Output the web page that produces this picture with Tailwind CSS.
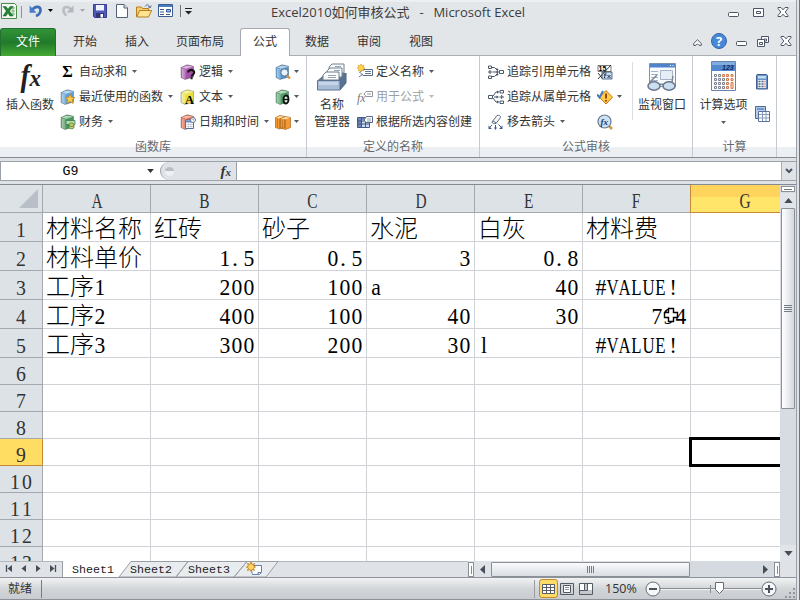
<!DOCTYPE html>
<html lang="zh-CN">

<head>
    <meta charset="UTF-8">
    <meta name="viewport" content="width=device-width, initial-scale=1.0">
    <title>Excel2010如何审核公式 - Microsoft Excel</title>
    <script src="https://cdn.jsdelivr.net/npm/@tailwindcss/browser@4"></script>
</head>

<body class="w-[800px] h-[600px] overflow-hidden bg-[#e3e6e9] font-['Open_Sans','Noto_Sans_CJK_SC',sans-serif] text-[12px] leading-4 text-[#333] whitespace-nowrap">
    <!-- Shared icon shapes -->
    <svg class="hidden">
        <symbol id="book" viewBox="0 0 16 16">
            <path d="M1 3.500 7 .8l6.500 1.400V13L5 15.500 1 13.500z" fill="currentColor" stroke="#00000070" stroke-width=".6" />
            <path d="m1.600 3.600 5.300-2.200 5.600 1.100-7 2z" fill="#fff" fill-opacity=".6" />
            <path d="M4.500 5v10L1.300 13.500v-9.700z" fill="#fff" fill-opacity=".3" />
            <path d="M2.800 4.800v9M5 5l8.300-2.500M5 5v10" stroke="#fff" stroke-opacity=".45" stroke-width=".7" fill="none" />
        </symbol>
        <symbol id="caret" viewBox="0 0 5 3">
            <path d="M0 0h5L2.5 3z" fill="currentColor" />
        </symbol>
        <symbol id="close" viewBox="0 0 12 10">
            <path d="M1 .5h3l2 2.300L8 .5h3v1L8.200 5l2.800 3.500v1H8L6 7.200 4 9.500H1v-1L3.800 5 1 1.500z" fill="#fff" stroke="#4c5666" />
        </symbol>
        <symbol id="min" viewBox="0 0 11 5">
            <rect x=".5" y=".5" width="10" height="4" rx="1" fill="#fff" stroke="#4c5666" />
        </symbol>
    </svg>

    <div class="h-full flex">
        <div class="w-[796px] h-full flex flex-col">
            <!-- Title bar -->
            <header class="h-[28px] shrink-0 flex items-start border-t-2 border-[#edf0f3] relative">
                <div class="flex items-start pt-[1px] pl-[1px]">
                    <svg class="w-4 h-4" viewBox="0 0 16 16">
                        <path d="M.5.5h13l2 2v13H.5z" fill="#f3faf2" stroke="#4d8b4d" />
                        <path d="M10 5h4M10 8h4M10 11h4M12 3v10" stroke="#7db37b" />
                        <path d="M2 3.500h3l2 2.800 2-2.800h3L8.500 8l3.500 5H8.800L7 10l-2 3H2l3.300-5z" fill="#258335" stroke="#14602a" stroke-width=".5" />
                    </svg>
                    <div class="w-px h-3 mt-[3px] ml-[4px] bg-[#8d9298]"></div>
                    <svg class="w-3.5 h-3.5 ml-[7px] mt-px" viewBox="0 0 14 14">
                        <path d="M3 6C6 1.500 11.500 2 11.500 6c0 3-2 5-4.500 6" fill="none" stroke="#3c6eb8" stroke-width="2.700" />
                        <path d="M.6 1.500v7.300h7z" fill="#477dca" />
                    </svg>
                    <svg class="w-[5px] h-[3px] ml-[5px] mt-[6px] text-black"><use href="#caret" /></svg>
                    <svg class="w-3.5 h-3.5 ml-[8px] mt-px" viewBox="0 0 14 14">
                        <path d="M10 6C8 2 2.500 2 2.500 6c0 3 1.500 4.500 3 5.500" fill="none" stroke="#b8bdc2" stroke-width="2.500" />
                        <path d="M12.500 1.500v7h-7z" fill="#b3b8be" />
                    </svg>
                    <svg class="w-[5px] h-[3px] ml-[5px] mt-[6px] text-[#a7abb0]"><use href="#caret" /></svg>
                    <svg class="w-3.5 h-3.5 ml-[8px] mt-px" viewBox="0 0 14 14">
                        <path d="M.5.5h13v13h-12l-1-1z" fill="#5058ba" stroke="#373d94" />
                        <path d="M3 1h8v5.500H3z" fill="#eef3ff" />
                        <path d="M3 9h8v4.500H3z" fill="#313676" />
                        <path d="M7.500 10h2.500v3.500H7.500z" fill="#fff" />
                    </svg>
                    <svg class="w-3 h-3.5 ml-[9px] mt-px" viewBox="0 0 12 14">
                        <path d="M.5.5H8L11.500 4v9.500H.5z" fill="#fff" stroke="#526079" />
                        <path d="M8 .5V4h3.500" fill="#dce5ef" stroke="#526079" />
                    </svg>
                    <svg class="w-4 h-3.5 ml-[8px] mt-px" viewBox="0 0 16 14">
                        <path d="M.5 12.500V3h5l1 1.500h6v8z" fill="#f5ce67" stroke="#b57e22" />
                        <path d="m.7 13 3-6.500h12L12.500 13z" fill="#ffe393" stroke="#b57e22" />
                        <path d="M9 2.500c2-2.500 4-2 5 1M12 2.500l2 1.500 1.300-2.500" fill="none" stroke="#5c6f91" />
                    </svg>
                    <svg class="w-[15px] h-[13px] ml-[6px] mt-px" viewBox="0 0 15 13">
                        <path d="M.5.5h14v12H.5z" fill="#fff" stroke="#3b5c92" />
                        <path d="M1 1h13v2H1z" fill="#4c7bc2" />
                        <path d="M2 5.500h4M2 8h4M2 10.500h4M8 10.500h4" stroke="#3e5685" />
                        <path d="M8.500 5.500h4V8h-4z" fill="#93b6e8" stroke="#3b5c92" />
                    </svg>
                    <div class="w-px h-3 mt-[2px] ml-[7px] bg-[#6d7278]"></div>
                    <svg class="w-[7px] h-[7px] ml-[4px] mt-[5px]" viewBox="0 0 7 7">
                        <path d="M0 .5h7" stroke="#222" />
                        <path d="M0 3h7L3.500 6.500z" fill="#222" />
                    </svg>
                </div>
                <div id="title" class="absolute left-[271px] top-[2px] w-[254px] text-[13px] text-[#3c3c3c] flex justify-between"><span>Excel2010如何审核公式</span><span>-</span><span>Microsoft Excel</span></div>
                <div class="ml-auto mr-[7px] flex items-center h-5">
                    <svg class="w-[11px] h-[5px] mt-[4px]"><use href="#min" /></svg>
                    <svg class="w-[11px] h-[9px] ml-[14px]" viewBox="0 0 11 9">
                        <path d="M.5.5h10v8H.5zM3.500 3.500h4v2h-4z" fill="#fff" stroke="#4c5666" />
                    </svg>
                    <svg class="w-3 h-2.5 ml-[13px]"><use href="#close" /></svg>
                </div>
            </header>

            <!-- Ribbon tabs -->
            <nav class="h-[28px] shrink-0 flex items-stretch text-center leading-[27px] shadow-[inset_0_-1px_#a9aeb4] text-[#333]">
                <div class="w-[56px] rounded-t-[3px] border border-b-0 border-[#227030] bg-linear-to-b from-[#329438] via-[#217a2a] to-[#45a934] text-white leading-[26px]">文件</div>
                <div class="w-[58px]">开始</div>
                <div class="w-[46px]">插入</div>
                <div class="w-[80px]">页面布局</div>
                <div class="w-[50px] bg-white border border-b-0 border-[#a5aab0] rounded-t-[3px] leading-[26px]">公式</div>
                <div class="w-[54px]">数据</div>
                <div class="w-[50px]">审阅</div>
                <div class="w-[54px]">视图</div>
                <div class="ml-auto mr-[4px] mb-[2px] flex items-center">
                    <svg class="w-[9px] h-[7px] mt-[3px]" viewBox="0 0 9 7">
                        <path d="M.7 4.500 4.500.8l3.800 3.700v1.800H6L4.500 4.800 3 6.300H.7z" fill="#fff" stroke="#4c5666" />
                    </svg>
                    <div class="w-4 h-4 ml-[9px] rounded-full border border-[#3264aa] bg-[#4788d8] text-white text-[13px] leading-[14px] font-bold">?</div>
                    <svg class="w-[11px] h-[5px] ml-[9px] mt-[4px]"><use href="#min" /></svg>
                    <svg class="w-3 h-[11px] ml-[10px]" viewBox="0 0 12 11">
                        <path d="M4.500.5h7v6h-7z" fill="#fff" stroke="#4c5666" />
                        <path d="M7 3h2.500v2H7z" fill="none" stroke="#4c5666" />
                        <path d="M.5 3.500h7v7h-7zM2.500 6.500h3v2h-3z" fill="#fff" stroke="#4c5666" />
                    </svg>
                    <svg class="w-3 h-2.5 ml-[11px]"><use href="#close" /></svg>
                </div>
            </nav>

            <!-- Ribbon -->
            <section class="h-[102px] shrink-0 flex bg-white bg-linear-to-b from-white from-90% to-[#edf0f3] to-90% border-b border-[#868b91] text-[#333]">
                <div class="w-[307px] border-r border-[#c4cad0] flex flex-col">
                    <div class="flex h-[83px] pt-[3px]">
                        <div class="w-[60px] flex flex-col items-center">
                            <div class="h-[38px] leading-[34px] font-['Liberation_Serif',serif] italic font-bold text-[31px] tracking-[-1px] text-[#222]"><span class="inline-block scale-x-90">f</span><span class="text-[23px]">x</span></div>
                            <div>插入函数</div>
                        </div>
                        <div class="w-[120px] flex flex-col">
                            <div class="h-[25px] flex items-center"><span class="w-[19px] text-center pr-1 font-['Liberation_Serif',serif] font-bold text-[16px] text-black">Σ</span>自动求和<svg class="w-[5px] h-[3px] ml-[5px] text-[#555b63]"><use href="#caret" /></svg></div>
                            <div class="h-[25px] flex items-center"><svg class="w-4 h-4 mr-[3px]" viewBox="0 0 16 16"><use href="#book" class="text-[#5d9fd8]" /><path d="m10 5 1.500 3.300 3.500.2-2.700 2.300.9 3.700-3.200-2-3.200 2 .9-3.700L5 8.500l3.500-.2z" fill="#ffca3d" stroke="#b87c18" stroke-width=".7" /></svg>最近使用的函数<svg class="w-[5px] h-[3px] ml-[5px] text-[#555b63]"><use href="#caret" /></svg></div>
                            <div class="h-[25px] flex items-center"><svg class="w-4 h-4 mr-[3px]" viewBox="0 0 16 16"><use href="#book" class="text-[#48975a]" /><path d="M6 6.500h9v4H6z" fill="#b5dba9" stroke="#317348" stroke-width=".7" /><path d="M9 10.500c0-2 5-2 5 0v3c0 1.800-5 1.800-5 0z" fill="#c2cc69" stroke="#446d31" stroke-width=".7" /><path d="M9 11.500c1 1.300 4 1.300 5 0" fill="none" stroke="#446d31" stroke-width=".7" /></svg>财务<svg class="w-[5px] h-[3px] ml-[5px] text-[#555b63]"><use href="#caret" /></svg></div>
                        </div>
                        <div class="w-[95px] flex flex-col">
                            <div class="h-[25px] flex items-center"><svg class="w-4 h-4 mr-[3px]" viewBox="0 0 16 16"><use href="#book" class="text-[#a252a8]" /><path d="M8.200 8.500c0-3.500 6-3.500 6 0 0 2-2.500 2-2.500 4M11.600 13.300v2" fill="none" stroke="#111" stroke-width="2" /></svg>逻辑<svg class="w-[5px] h-[3px] ml-[5px] text-[#555b63]"><use href="#caret" /></svg></div>
                            <div class="h-[25px] flex items-center"><svg class="w-4 h-4 mr-[3px] overflow-visible" viewBox="0 0 16 16"><use href="#book" class="text-[#e9df42]" /><text x="5" y="14.500" class="font-['Liberation_Serif',serif] font-bold text-[12.5px]">A</text></svg>文本<svg class="w-[5px] h-[3px] ml-[5px] text-[#555b63]"><use href="#caret" /></svg></div>
                            <div class="h-[25px] flex items-center"><svg class="w-4 h-4 mr-[3px]" viewBox="0 0 16 16"><use href="#book" class="text-[#e25d38]" /><path d="M5.500 6h8v8.500h-8z" fill="#fff" stroke="#536fa5" /><path d="M6 6.500h7v2H6z" fill="#648bd0" /><path d="M8.300 8v6M11 8v6M6 10.500h7M6 12.500h7" stroke="#aab9d5" stroke-width=".6" /><circle cx="13" cy="6" r="2.500" fill="#fff" stroke="#6a7790" /><path d="M13 4.500V6h1.200" stroke="#6a7790" stroke-width=".7" fill="none" /></svg>日期和时间<svg class="w-[5px] h-[3px] ml-[5px] shrink-0 text-[#555b63]"><use href="#caret" /></svg></div>
                        </div>
                        <div class="flex flex-col">
                            <div class="h-[25px] flex items-center"><svg class="w-4 h-4" viewBox="0 0 16 16"><use href="#book" class="text-[#4f93d1]" /><path d="m12 11.500 3 3" stroke="#d69238" stroke-width="2.200" /><circle cx="9.500" cy="8.500" r="3.600" fill="#e5f2fb" stroke="#69778b" /></svg><svg class="w-[5px] h-[3px] ml-[3px] text-[#555b63]"><use href="#caret" /></svg></div>
                            <div class="h-[25px] flex items-center"><svg class="w-4 h-4" viewBox="0 0 16 16"><use href="#book" class="text-[#509e67]" /><ellipse cx="11" cy="10.500" rx="2.500" ry="4" fill="#d8ead9" stroke="#111" stroke-width="1.900" /><path d="M9 10.500h4" stroke="#111" stroke-width="1.300" /></svg><svg class="w-[5px] h-[3px] ml-[3px] text-[#555b63]"><use href="#caret" /></svg></div>
                            <div class="h-[25px] flex items-center"><svg class="w-4 h-4" viewBox="0 0 16 16"><path d="M.5 3.500 5 1.500l4.500 1v11l-5 1.500-4-1.500zM5.500 4.500l5-2 5 1v10l-5 2-5-1.500z" fill="#f39a35" stroke="#a9631b" stroke-width=".7" /><path d="m1 3.700 4-1.700 4 .8-4.500 1.500zM6 4.700l4.500-1.700 4.500.7-4.500 1.600z" fill="#ffe0ae" /><path d="M2.500 4.500v9M4.500 5v9.500M7.500 5.500v9M10.500 6v9" stroke="#b96d20" stroke-width=".7" /></svg><svg class="w-[5px] h-[3px] ml-[3px] text-[#555b63]"><use href="#caret" /></svg></div>
                        </div>
                    </div>
                    <div class="text-center text-[#65696f]">函数库</div>
                </div>

                <div class="w-[173px] border-r border-[#c4cad0] flex flex-col">
                    <div class="flex h-[83px] pt-[3px]">
                        <div class="w-[50px] flex flex-col items-center">
                            <svg class="w-[32px] h-[32px] mt-[3px] mb-[3px] shrink-0" viewBox="0 0 32 32">
                                <path d="m2 18 8-7h20l-6 7z" fill="#657990" />
                                <path d="M13 9V5l3-3h12v9H13z" fill="#f9fbfc" stroke="#71808d" />
                                <path d="M11 13V9l3-3h12v9H11z" fill="#f9fbfc" stroke="#71808d" />
                                <path d="M7 18v-5l3-3h13v8z" fill="#f9fbfc" stroke="#71808d" />
                                <path d="M12 13.500h8M12 15.500h8M18 8.500h6M19 4.500h6" stroke="#97a3ae" />
                                <path d="M24 18l6-7v10l-6 7z" fill="#587296" stroke="#4f6581" />
                                <path d="M1.500 18.500H24V28H1.500z" fill="#a9bdd6" stroke="#5c7492" />
                                <path d="M3 20h19v3H3z" fill="#c5d5e7" />
                            </svg>
                            <div>名称</div>
                            <div class="mt-px">管理器</div>
                        </div>
                        <div class="flex flex-col">
                            <div class="h-[25px] flex items-center"><svg class="w-4 h-4 mr-[3px]" viewBox="0 0 16 16"><path d="M2.500 8 6 5.500h9.500v6H6z" fill="#fff" stroke="#59698a" /><path d="M8 7.500h6M8 9.500h6M2 13l4-3" stroke="#65748f" /><path d="m4 0 1 2 2-1-1 2 2 1-2 1 1 2-2-1-1 2-1-2-2 1 1-2-2-1 2-1-1-2 2 1z" fill="#ffd543" stroke="#dc982e" stroke-width=".6" /></svg>定义名称<svg class="w-[5px] h-[3px] ml-[5px] text-[#555b63]"><use href="#caret" /></svg></div>
                            <div class="h-[25px] flex items-center text-[#9c9fa3]"><svg class="w-4 h-4 mr-[3px]" viewBox="0 0 16 16"><text x="0" y="12.500" fill="#777" class="font-['Liberation_Serif',serif] italic text-[12px]">fx</text><path d="M7 5 9 2.500h6.500v5H9z" fill="#fff" stroke="#91969d" /><path d="M10 5h4" stroke="#999" /></svg>用于公式<svg class="w-[5px] h-[3px] ml-[5px] text-[#b5b8bc]"><use href="#caret" /></svg></div>
                            <div class="h-[25px] flex items-center"><svg class="w-4 h-4 mr-[3px]" viewBox="0 0 16 16"><path d="M.5 3.500h12v10H.5z" fill="#cedcf0" stroke="#415784" /><path d="M1 4h3v9H1zM4 4h8v2H4z" fill="#7188b8" /><path d="M4.500 4v9M8.500 4v9M1 7h11M1 10h11" stroke="#415784" /><path d="M7 6 9.500 2.500h6v6H9z" fill="#fff" stroke="#59698a" /><path d="M10 5h4M10 7h4" stroke="#65748f" stroke-width=".7" /></svg>根据所选内容创建</div>
                        </div>
                    </div>
                    <div class="text-center text-[#65696f]">定义的名称</div>
                </div>

                <div class="w-[213px] border-r border-[#c4cad0] flex flex-col">
                    <div class="flex h-[83px] pt-[3px]">
                        <div class="w-[117px] pl-[8px] flex flex-col">
                            <div class="h-[25px] flex items-center"><svg class="w-4 h-4 mr-[3px]" viewBox="0 0 16 16"><path d="M.5 2h3v2.500h-3zM.5 12h3v2.500h-3zM11.500 6.500h4v3h-4z" fill="#fff" stroke="#4d5a6c" /><path d="M4 3.500h2.500L9 6M4 12.500h2.500L9 10M4.500 8h6M0 8h4M2 6v4" fill="none" stroke="#48566a" /><path d="m8 4 2.500 1-1 2.500zM8 12l2.500-1-1-2.500zM8.500 6.500l2.500 1.500-2.500 1.500z" fill="#48566a" /></svg>追踪引用单元格</div>
                            <div class="h-[25px] flex items-center"><svg class="w-4 h-4 mr-[3px]" viewBox="0 0 16 16"><path d="M12 1.500h3.500V4H12zM12 12h3.500v2.500H12zM.5 6.500h4v3h-4z" fill="#fff" stroke="#4d5a6c" /><path d="m5 7 3-4h2M5 9l3 4h2M6 8h3M11.500 8H16M13.700 6v4" fill="none" stroke="#48566a" /><path d="M9 1.500v3L11.500 3zM9 11.500v3l2.500-1.500zM8.500 6.500v3L11 8z" fill="#48566a" /></svg>追踪从属单元格</div>
                            <div class="h-[25px] flex items-center"><svg class="w-4 h-4 mr-[3px]" viewBox="0 0 16 16"><path d="M4 8 9 1.500c2-.8 4 .5 3.500 2L8 9.500c-2 .5-4 0-4-1.500z" fill="#f4f7fa" stroke="#5c6b83" /><path d="m5 7 3.500 2" stroke="#5c6b83" /><path d="m4 11-3 3M7.500 11v4M10.500 10.500l3 3" stroke="#3e5b8b" /><path d="M.5 11.500V15H4zM6 13.500h3L7.500 16zM14.500 11.500V15H11z" fill="#3e5b8b" /></svg>移去箭头<svg class="w-[5px] h-[3px] ml-[5px] text-[#555b63]"><use href="#caret" /></svg></div>
                        </div>
                        <div class="w-[35px] flex flex-col">
                            <!-- show formulas: a number over a formula, split by a diagonal -->
                            <div class="h-[25px] flex items-center"><svg class="w-4 h-4" viewBox="0 0 16 16"><path d="M1 1.500h13v6H1z" fill="#fff" stroke="#444" stroke-width=".7" /><path d="M5 8h10v7H5z" fill="#c5daf3" stroke="#394b68" stroke-width=".8" /><text x="1.500" y="7.300" class="font-['Liberation_Sans',sans-serif] font-bold text-[7px]">15</text><path d="M9.500 9c-1.500-.5-1.500 1-2 5M7 11h2.500M10.500 11l3 3M13.500 11l-3 3" fill="none" stroke="#1d2c49" /><path d="M1 15 14 1M1 9l4 5" stroke="#222" stroke-width=".9" /></svg></div>
                            <div class="h-[25px] flex items-center"><svg class="w-4 h-4" viewBox="0 0 16 16"><path d="m9 1.500 6.500 6.700L9 15 2.500 8.200z" fill="#ffcf3d" stroke="#d06d21" /><path d="m0 5.500 2.500 3L6 2" fill="none" stroke="#477abd" stroke-width="2" /><path d="M9 4.500v5M9 11v1.500" stroke="#8c2918" stroke-width="1.700" /></svg><svg class="w-[5px] h-[3px] ml-[4px] text-[#555b63]"><use href="#caret" /></svg></div>
                            <div class="h-[25px] flex items-center"><svg class="w-4 h-4" viewBox="0 0 16 16"><path d="m12 12 3 3" stroke="#db9733" stroke-width="2.500" /><circle cx="7.500" cy="7.500" r="6.500" fill="#cfe2f3" stroke="#687990" stroke-width="1.200" /><text x="3.500" y="10.500" fill="#173670" class="font-['Liberation_Serif',serif] italic font-bold text-[9px]">fx</text></svg></div>
                        </div>
                        <div class="w-px h-[58px] mt-[3px] bg-[#d9dde1]"></div>
                        <div class="w-[58px] flex flex-col items-center">
                            <svg class="w-[32px] h-[30px] mt-[3px] mb-[5px] shrink-0" viewBox="0 0 32 30">
                                <path d="M3.500 1.500h26v23h-26z" fill="#fafcfe" stroke="#7d91ab" />
                                <path d="M4 2h25v3.500H4z" fill="#5084ca" />
                                <path d="M24 3.500h1M26.500 3.500h1" stroke="#fff" />
                                <path d="M5 9.500h7M5 12.500h7M5 15.500h7M5 18.500h7M14.500 8.500h12v9h-12z" fill="#e6edf5" stroke="#a3b2c5" />
                                <path d="M4 20 11 13M26 20l1-6" stroke="#7e8792" stroke-width="1.500" />
                                <ellipse cx="8" cy="24" rx="6" ry="4.200" fill="#ccdff0" stroke="#68798c" stroke-width="1.500" />
                                <ellipse cx="23" cy="24" rx="6" ry="4.200" fill="#ccdff0" stroke="#68798c" stroke-width="1.500" />
                                <path d="M13.500 23c1-1 3-1 4 0" fill="none" stroke="#68798c" stroke-width="1.500" />
                            </svg>
                            <div>监视窗口</div>
                        </div>
                    </div>
                    <div class="text-center text-[#65696f]">公式审核</div>
                </div>

                <div class="w-[84px] border-r border-[#c4cad0] flex flex-col">
                    <div class="flex h-[83px] pt-[3px]">
                        <div class="w-[61px] flex flex-col items-center">
                            <svg class="w-[26px] h-[31px] mt-[2px] mb-[5px] shrink-0" viewBox="0 0 26 31">
                                <path d="M.5.5h24v29H.5z" fill="#fdfdfd" stroke="#6684ae" />
                                <path d="M1 1h23v9H1z" fill="#548acd" />
                                <path d="M1 1h23v3H1z" fill="#83addf" />
                                <text x="11" y="8.500" fill="#102b68" class="font-['Liberation_Sans',sans-serif] italic font-bold text-[7px]">123</text>
                                <path d="M3.500 13.500h2v2h-2zM7.500 13.500h2v2h-2zM3.500 17.500h2v2h-2zM7.500 17.500h2v2h-2zM11.500 17.500h2v2h-2zM3.500 21.500h2v2h-2zM7.500 21.500h2v2h-2zM11.500 21.500h2v2h-2zM3.500 25.500h2v2h-2zM7.500 25.500h2v2h-2zM11.500 25.500h2v2h-2z" fill="#eee" stroke="#7b8490" />
                                <path d="M11.500 13.500h2v2h-2zM15.500 13.500h2v2h-2zM20 13.500h2v2h-2zM15.500 17.500h2v2h-2zM20 17.500h2v2h-2zM15.500 21.500h2v2h-2zM20 21.500h2v6h-2zM15.500 25.500h2v2h-2z" fill="#ffd6b5" stroke="#d27a4f" />
                            </svg>
                            <div>计算选项</div>
                            <svg class="w-[5px] h-[3px] mt-[8px] text-[#555b63]"><use href="#caret" /></svg>
                        </div>
                        <div class="flex flex-col">
                            <svg class="w-4 h-4 mt-[15px]" viewBox="0 0 16 16">
                                <path d="M3 .5h9.500l1 1v13.500H2.500V1.500z" fill="#6b93ca" stroke="#415f91" />
                                <path d="M4 2h8v2.500H4z" fill="#bfdcf3" />
                                <path d="M4 6h8v8H4z" fill="#eef4fb" />
                                <path d="M4.500 7.500h2M7.500 7.500h2M4.500 10h2M7.500 10h2M4.500 12.500h2M7.500 12.500h2" stroke="#526688" stroke-width="1.300" />
                                <path d="M10.500 7.500h1M10.500 10h1M10.500 12.500h1" stroke="#dc5038" stroke-width="1.500" />
                            </svg>
                            <svg class="w-[17px] h-[17px] mt-[16px]" viewBox="0 0 17 17">
                                <path d="M1.500.5h10v12h-10z" fill="#b8cce7" stroke="#4e6892" />
                                <path d="M3 2h7v2H3z" fill="#6d98d3" />
                                <path d="M4.500 5.500h11v10h-11z" fill="#fff" stroke="#59709a" />
                                <path d="M5 8.500h10M5 12h10M8.500 6v9M12 6v9" stroke="#849abd" />
                            </svg>
                        </div>
                    </div>
                    <div class="text-center text-[#65696f]">计算</div>
                </div>
            </section>

            <!-- Formula bar -->
            <section class="h-[27px] shrink-0 pt-[3px] bg-[#dfe3e7] border-b border-[#858a91]">
                <div class="h-5 flex border-y border-[#9ba1a9] bg-white">
                    <div class="w-[160px] flex items-center border-l border-[#9ba1a9]">
                        <span class="w-[139px] pt-[2px] text-center font-['Liberation_Mono',monospace] text-[13.3px] text-black">G9</span>
                        <svg class="w-[7px] h-[4px] ml-[7px] text-[#333]"><use href="#caret" /></svg>
                    </div>
                    <div class="w-[77px] flex items-center rounded-l-full border-l border-r border-[#9ba1a9] bg-[#dfe3e7]">
                        <div class="w-[9px] h-[9px] ml-[4px] rounded-full bg-linear-to-b from-[#b9bec3] from-50% to-[#eff0f2] to-50%"></div>
                        <span class="ml-auto mr-[5px] font-['Liberation_Serif',serif] italic font-bold text-[15px]">f<span class="text-[11px]">x</span></span>
                    </div>
                    <div class="ml-auto w-[15px] flex items-center justify-center border-l border-[#a9aeb4] bg-[#dfe3e7]">
                        <svg class="w-2 h-[6px]" viewBox="0 0 8 6"><path d="m1 1 3 3 3-3" fill="none" stroke="#4c5463" stroke-width="2" /></svg>
                    </div>
                </div>
            </section>

            <!-- Worksheet -->
            <main class="h-[376px] shrink-0 flex">
                <div class="relative w-[780px] h-full overflow-hidden bg-white">
                    <div id="sheet" class="grid grid-cols-[43px_repeat(6,108px)_108px] w-[799px]"></div>
                    <div class="absolute left-[689px] top-[252px] w-[110px] h-[30px] border-[3px] border-black"></div>
                    <svg class="absolute left-[663px] top-[122px] w-4 h-4" viewBox="0 0 16 16">
                        <path d="M5.500 1.500h5v4h4v5h-4v4h-5v-4h-4v-5h4z" fill="#fff" stroke="#000" stroke-width="1.400" />
                    </svg>
                </div>
                <div class="w-4 flex flex-col bg-[#d7dce2]">
                    <div class="h-[6px] m-px border border-[#8b9097] bg-white flex items-center justify-center"><div class="w-2 h-px bg-[#777]"></div></div>
                    <div class="h-[15px] flex items-center justify-center bg-[#e1e5e9]"><svg class="w-[9px] h-[5px] rotate-180 text-[#454d59]"><use href="#caret" /></svg></div>
                    <div class="h-[201px] mx-px rounded-[1px] border border-[#8b9097] bg-linear-to-r from-white to-[#d4d9df] flex flex-col items-center justify-center gap-px">
                        <div class="w-2 h-px bg-[#777d85]"></div>
                        <div class="w-2 h-px bg-[#777d85]"></div>
                        <div class="w-2 h-px bg-[#777d85]"></div>
                        <div class="w-2 h-px bg-[#777d85]"></div>
                    </div>
                    <div class="mt-auto h-4 flex items-center justify-center bg-[#e1e5e9]"><svg class="w-[9px] h-[5px] text-[#454d59]"><use href="#caret" /></svg></div>
                </div>
            </main>

            <!-- Sheet tabs and horizontal scrollbar -->
            <section class="h-[17px] shrink-0 flex bg-[#dfe3e7] border-b border-[#8d9299]">
                <div class="relative w-[468px] flex">
                    <svg class="absolute inset-0 w-[468px] h-4" viewBox="0 0 468 16">
                        <path d="M0 .5h468" stroke="#b4b9bf" />
                        <path d="M63 0h68l-12 16H63z" fill="#fff" />
                        <path d="M119 16 131 .5h57L176 16zM176 16 188 .5h59L234 16zM234 16 247 .5h31L266 16z" fill="#e9ecef" stroke="#9a9fa6" />
                        <path d="M62.500 0v16" stroke="#9a9fa6" />
                        <path d="M6.500 4v7M55.500 4v7" stroke="#454d59" stroke-width="1.300" />
                        <path d="M12 4v7L7.500 7.500zM26 4v7l-4.500-3.500zM36 4v7l4.500-3.500zM50 4v7l4.500-3.500z" fill="#454d59" />
                        <path d="M250.500 4.500h11v7l-2 2h-7z" fill="#fff" stroke="#6681ad" />
                        <path d="M258 13.500v-2h3" fill="#b7cae5" stroke="#6681ad" />
                        <path d="m251 1 1 2.500 2.500-1-1 2.500 2 1-2 1 1 2.500-2.500-1-1 2-1-2-2.500 1 1-2.500-2-1 2-1-1-2.500 2.500 1z" fill="#ffd458" stroke="#bd7a22" stroke-width=".8" />
                    </svg>
                    <div class="relative ml-[72px] flex gap-4 pt-[2px] leading-[14px] font-['Liberation_Mono',monospace] text-[11.67px] text-[#222]">
                        <span>Sheet1</span><span>Sheet2</span><span>Sheet3</span>
                    </div>
                </div>
                <div class="w-[6px] mt-px border border-[#8b9097] bg-white flex items-center justify-center"><div class="w-px h-2 bg-[#888]"></div></div>
                <div class="w-[17px] flex items-center justify-center"><svg class="w-[5px] h-[9px]" viewBox="0 0 5 9"><path d="M5 0v9L0 4.500z" fill="#454d59" /></svg></div>
                <div class="w-[199px] mt-px rounded-[1px] border border-[#8b9097] bg-linear-to-b from-[#fafbfc] to-[#d9dee3] flex items-center justify-center gap-px">
                    <div class="w-px h-[7px] bg-[#777d85]"></div>
                    <div class="w-px h-[7px] bg-[#777d85]"></div>
                    <div class="w-px h-[7px] bg-[#777d85]"></div>
                    <div class="w-px h-[7px] bg-[#777d85]"></div>
                </div>
                <div class="w-[84px] bg-[#d5dae1] flex items-center justify-end"><svg class="w-[5px] h-[9px] mr-[6px]" viewBox="0 0 5 9"><path d="M0 0v9l5-4.500z" fill="#454d59" /></svg></div>
                <div class="w-[6px] mt-px border border-[#8b9097] bg-white flex items-center justify-center"><div class="w-px h-2 bg-[#888]"></div></div>
            </section>

            <!-- Status bar -->
            <footer class="h-[22px] shrink-0 flex items-center border-b border-[#8d9299] bg-linear-to-b from-[#f1f2f3] via-[#d3d6d8] to-[#c9ccd0]">
                <span class="w-[41px] pl-[8px]">就绪</span>
                <div class="w-px h-[18px] bg-[#777c82]"></div>
                <div class="ml-auto w-px h-[18px] bg-[#999da3]"></div>
                <div class="w-[19px] h-[19px] ml-[4px] rounded-[3px] border border-[#c48b2c] bg-[#ffdc68] flex items-center justify-center">
                    <svg class="w-[13px] h-[10px]" viewBox="0 0 13 10"><path d="M.5.5h12v9H.5zM.5 3.500h12M.5 6.500h12M4.500 0v10M8.500 0v10" fill="#fff" stroke="#5a5d68" /></svg>
                </div>
                <svg class="w-[14px] h-[12px] ml-[2px]" viewBox="0 0 14 12"><path d="M.5.5h13v11H.5z" fill="#d2d6da" stroke="#555b65" /><path d="M3.500 2.500h7v7h-7z" fill="#fff" stroke="#555b65" /><path d="M5 4.500h4M5 6.500h4" stroke="#8b919a" /></svg>
                <svg class="w-[14px] h-[12px] ml-[5px]" viewBox="0 0 14 12"><path d="M.5.5h13v11H.5z" fill="#c5c9ce" stroke="#555b65" /><path d="M1 1h4v6H1zM9 1h4v6H9z" fill="#fff" /><path d="M5.500 0v7.500H0M8.500 0v7.500H5.500" fill="none" stroke="#555b65" /></svg>
                <span class="w-[32px] ml-[12px] mr-[7px] text-[12.5px]">150%</span>
                <svg class="w-[134px] h-[18px] shrink-0" viewBox="0 0 134 18">
                    <path d="M16 8.500h101" stroke="#888d94" />
                    <path d="M16 9.500h101" stroke="#f0f1f2" />
                    <path d="M66.500 5v8" stroke="#888d94" />
                    <path d="M71.500 2.500h8v7l-4 4-4-4z" fill="#fff" stroke="#666c76" />
                    <circle cx="9" cy="9" r="7" fill="#f6f7f8" stroke="#666c76" />
                    <circle cx="125" cy="9" r="7" fill="#f6f7f8" stroke="#666c76" />
                    <path d="M5 9h8M121 9h8M125 5v8" stroke="#4d535e" stroke-width="2" />
                </svg>
                <svg class="w-3 h-3 ml-[6px] mt-[8px]" viewBox="0 0 12 12"><path d="M9 1h2v2H9zM9 5h2v2H9zM5 5h2v2H5zM9 9h2v2H9zM5 9h2v2H5zM1 9h2v2H1z" fill="#92979d" /></svg>
            </footer>
        </div>
        <!-- Right window frame -->
        <div class="w-1 h-full bg-[#dfe3e7] border-l border-r border-l-[#9ba0a6] border-r-[#6e747b]"></div>
    </div>

    <script>
        const columns = ['A', 'B', 'C', 'D', 'E', 'F', 'G'];
        const rows = [
            ['材料名称', '红砖', '砂子', '水泥', '白灰', '材料费', ''],
            ['材料单价', 1.5, 0.5, 3, 0.8, '', ''],
            ['工序1', 200, 100, 'a', 40, '#VALUE!', ''],
            ['工序2', 400, 100, 40, 30, 794, ''],
            ['工序3', 300, 200, 30, 'l', '#VALUE!', ''],
            [], [], [], [], [], [], [], []
        ];

        // Latin characters take half the width of a Chinese one
        function chars(value) {
            return [...String(value)].map(c => {
                if (/[A-Z]/.test(c)) {
                    return `<span class="inline-flex w-3 justify-center"><span class="inline-block scale-x-70">${c}</span></span>`;
                }
                if (c === '.') {
                    return `<span class="inline-block w-3 pl-px text-left">${c}</span>`;
                }
                if (/[\x21-\x7e]/.test(c)) {
                    return `<span class="inline-block w-3 text-center scale-x-90">${c}</span>`;
                }
                return c;
            }).join('');
        }

        let html = `<div class="h-7 bg-[#dde2e7] border-r border-b border-[#a3a8ae] flex justify-end items-end p-1"><svg class="w-[19px] h-[19px]" viewBox="0 0 19 19"><path d="M19 0v19H0z" fill="#b9bfc7" /></svg></div>`;
        columns.forEach(c => {
            html += c === 'G'
                ? `<div class="h-7 -ml-px border-l border-b border-[#c58a35] bg-linear-to-b from-[#ffd45c] from-45% to-[#ffe56a] to-45% text-center text-[22px] leading-[32px] font-['Liberation_Serif',serif] text-[#333]">${chars(c)}</div>`
                : `<div class="h-7 border-r border-b border-[#a3a8ae] bg-[#dde2e7] text-center text-[22px] leading-[32px] font-['Liberation_Serif',serif] text-[#333]">${chars(c)}</div>`;
        });

        rows.forEach((row, i) => {
            const tall = i < 5;
            const active = i === 8;
            html += `<div class="${tall ? 'h-[29px] leading-[34px]' : 'h-[27px] leading-[31px]'} ${active ? 'bg-[#ffdc62] border-[#c58a35]' : 'bg-[#dde2e7] border-[#a3a8ae]'} overflow-hidden border-r border-b text-center text-[22px] font-['Liberation_Serif',serif] text-[#333]">${chars(i + 1)}</div>`;
            columns.forEach((c, j) => {
                const value = row[j] ?? '';
                const align = typeof value === 'number' ? 'text-right pr-[3px]' : value === '#VALUE!' ? 'text-center' : 'text-left pl-[3px]';
                html += `<div class="${tall ? 'h-[29px]' : 'h-[27px]'} ${align} overflow-hidden border-r border-b border-[#cfd2d6] text-[24px] leading-[33px] font-light font-['Liberation_Serif','Noto_Sans_CJK_SC',serif] text-black">${chars(value)}</div>`;
            });
        });
        document.getElementById('sheet').innerHTML = html;
    </script>
</body>

</html>
